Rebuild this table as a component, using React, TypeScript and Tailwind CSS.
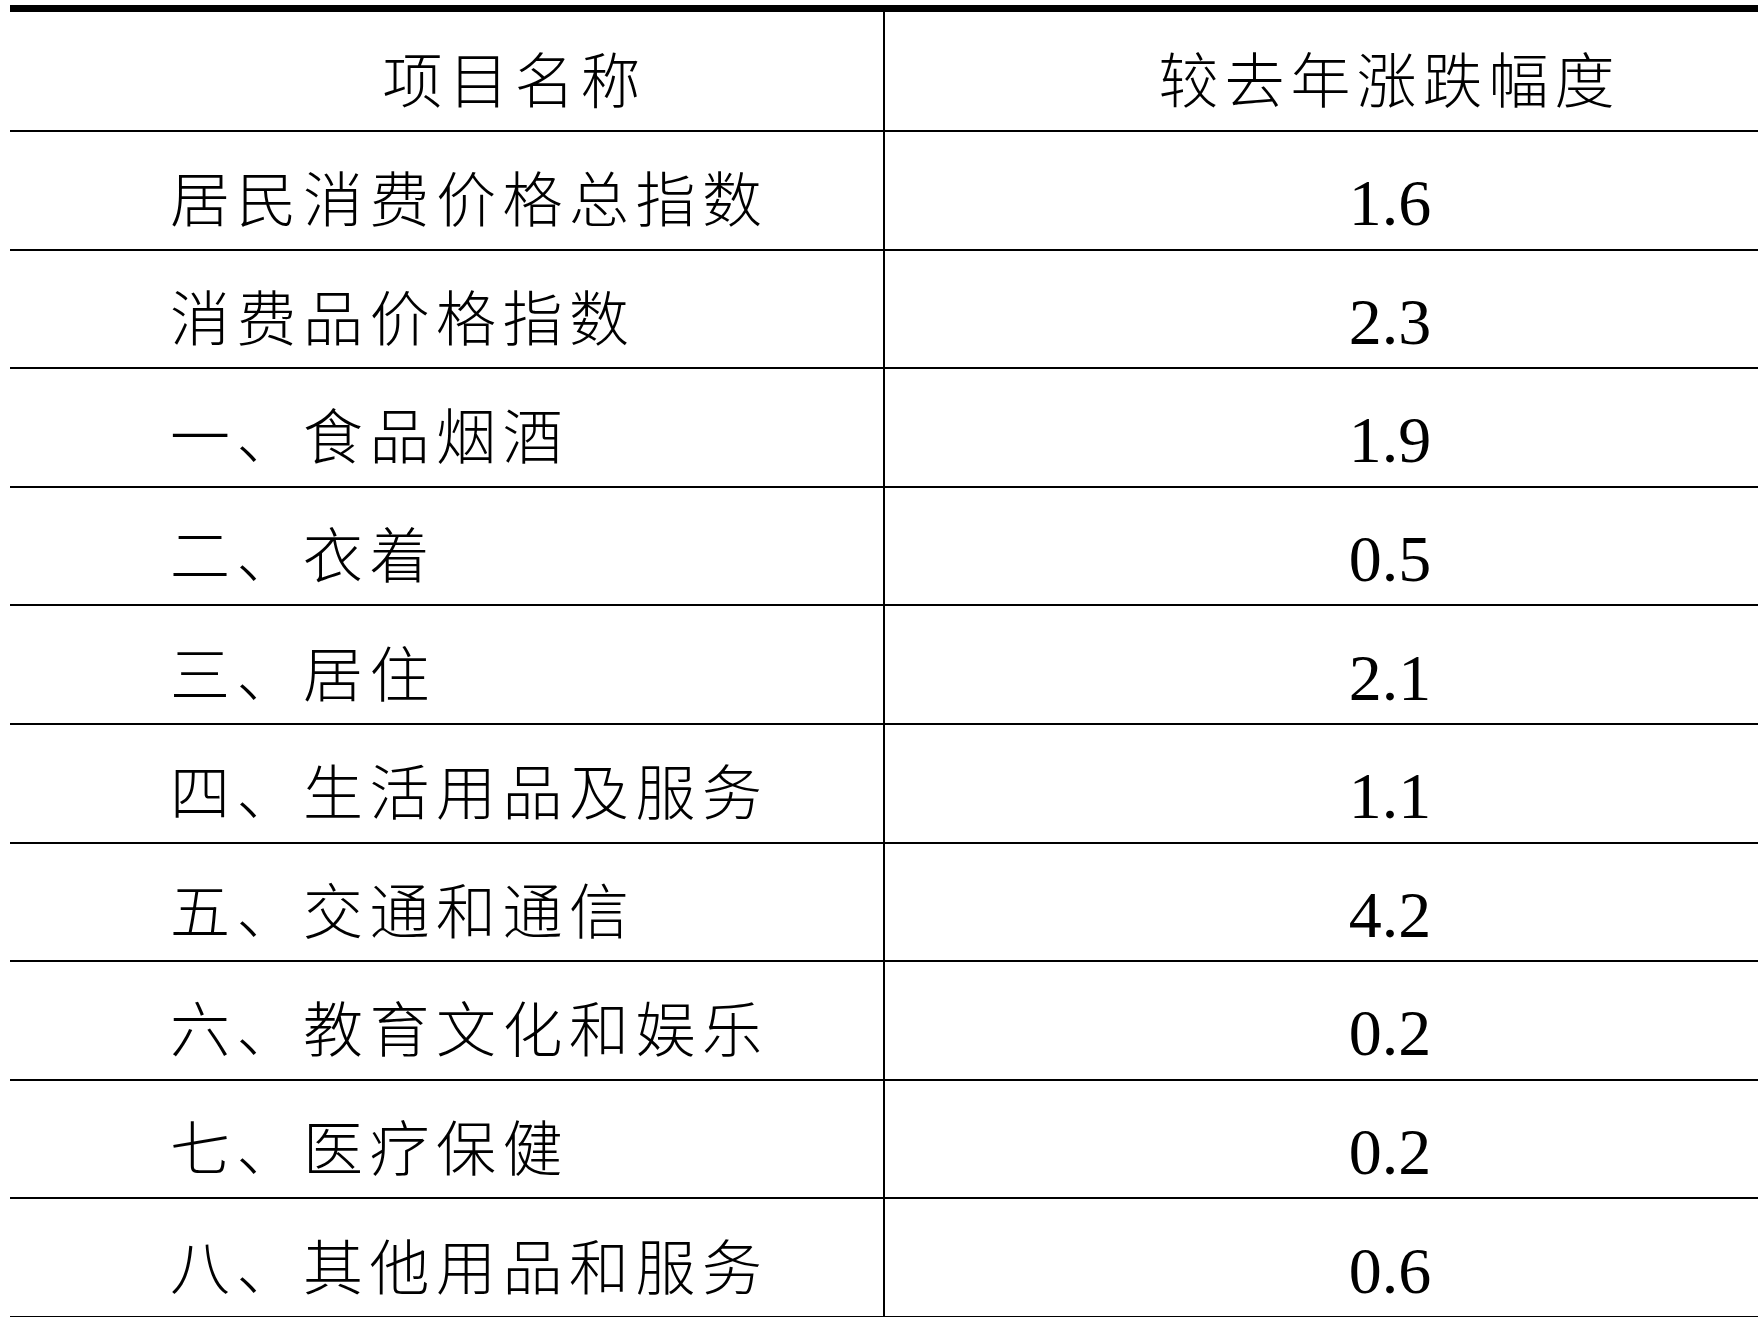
const ROWS: Array<[string, string]> = [
  ['居民消费价格总指数', '1.6'],
  ['消费品价格指数', '2.3'],
  ['一、食品烟酒', '1.9'],
  ['二、衣着', '0.5'],
  ['三、居住', '2.1'],
  ['四、生活用品及服务', '1.1'],
  ['五、交通和通信', '4.2'],
  ['六、教育文化和娱乐', '0.2'],
  ['七、医疗保健', '0.2'],
  ['八、其他用品和服务', '0.6'],
];

export default function App() {
  return (
    <div
      className="h-[1317px] w-full overflow-hidden bg-white text-black"
      style={{ fontFamily: '"Liberation Serif", "Noto Sans CJK SC", serif' }}
    >
      <div className="ml-[10px] mr-[3px] mt-[5px] border-t-[7px] border-black">
        {/* Header */}
        <div className="grid h-[120px] grid-cols-[875px_1fr] border-b-2 border-black">
          <div className="flex items-center justify-center border-r-2 border-black pl-[136px] pt-[24px] text-[60px] font-light leading-none tracking-[6px]">
            项目名称
          </div>
          <div className="flex items-center justify-center pl-[136px] pt-[24px] text-[60px] font-light leading-none tracking-[6px]">
            较去年涨跌幅度
          </div>
        </div>

        {/* Body rows */}
        {ROWS.map(([name, value]) => (
          <div
            key={name}
            className="grid h-[118.6px] grid-cols-[875px_1fr] border-b-2 border-black"
          >
            <div className="flex items-center border-r-2 border-black pl-[160px] pt-[24px] text-[60px] font-light leading-none tracking-[6.5px]">
              {name}
            </div>
            <div className="flex items-center justify-center pl-[137px] pt-[26px] text-[66px] leading-none">
              {value}
            </div>
          </div>
        ))}
      </div>
    </div>
  );
}
